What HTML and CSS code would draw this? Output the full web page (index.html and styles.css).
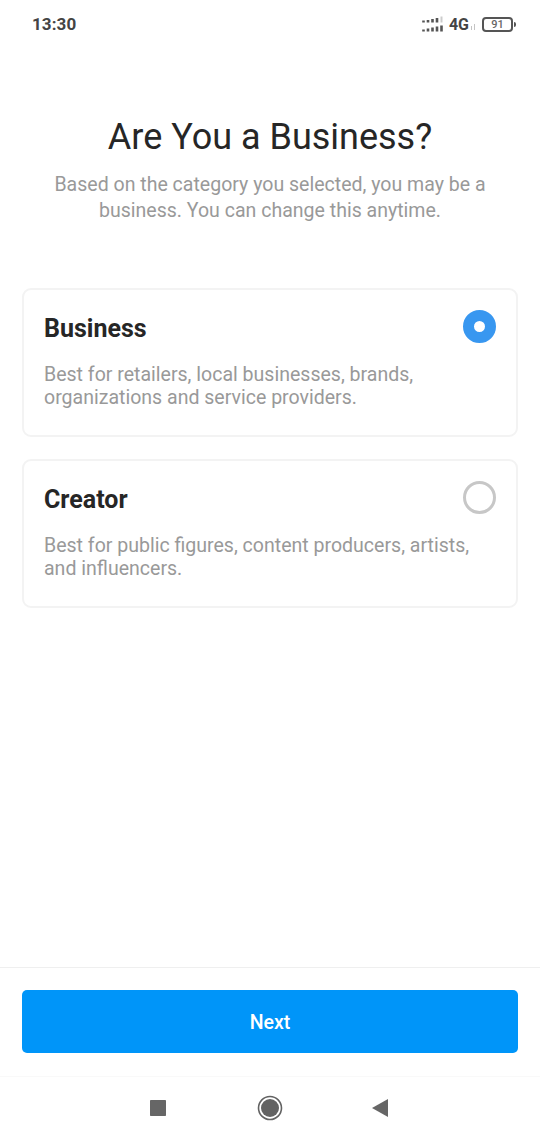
FILE: index.html
```html
<!DOCTYPE html>
<html lang="en">
<head>
<meta charset="utf-8">
<title>Are You a Business?</title>
<link rel="stylesheet" href="styles.css">
</head>
<body>
<div class="screen">
  <header class="status">
    <span class="clock">13:30</span>
    <div class="indicators">
      <svg class="signal" width="21" height="16" viewBox="0 0 21 16" fill="none" stroke="#555" stroke-width="2.6"><path d="M1.5 6.5V4.5M6 6.5V4M10.5 6.5V3M15 6.5V2"/><path d="M19.5 6.5V.5" stroke="#ccc" stroke-width="2"/><path d="M1.5 15.5v-2M6 15.5v-3M10.5 15.5v-4M15 15.5v-5M19.5 15.5v-6"/></svg>
      <span class="network">4G</span>
      <svg class="activity" width="6" height="6" viewBox="0 0 6 6" stroke="#c4c4c4"><path d="M1.5 6V2M4.5 6V0"/></svg>
      <span class="battery">91</span>
      <span class="battery-tip"></span>
    </div>
  </header>
  <main class="content">
    <h1 class="title">Are You a Business?</h1>
    <p class="subtitle">Based on the category you selected, you may be a<br>business. You can change this anytime.</p>
    <div class="options">
      <section class="card">
        <div class="card-head"><h2 class="card-title">Business</h2><span class="radio selected"></span></div>
        <p class="card-text">Best for retailers, local businesses, brands,<br>organizations and service providers.</p>
      </section>
      <section class="card">
        <div class="card-head"><h2 class="card-title">Creator</h2><span class="radio"></span></div>
        <p class="card-text">Best for public figures, content producers, artists,<br>and influencers.</p>
      </section>
    </div>
  </main>
  <footer class="footer"><button class="next">Next</button></footer>
  <nav class="navbar">
    <svg width="18" height="18" viewBox="0 0 18 18"><rect x="1" y="1" width="16" height="16" rx=".7" fill="#666"/></svg>
    <svg width="26" height="26" viewBox="0 0 26 26"><circle cx="13" cy="13" r="11.5" fill="none" stroke="#626262" stroke-width="1.6"/><circle cx="13" cy="13" r="9" fill="#626262"/></svg>
    <svg class="back" width="18" height="20" viewBox="0 0 18 20"><path d="M0 10L16 1v18z" fill="#666"/></svg>
  </nav>
</div>
</body>
</html>
```
FILE: styles.css
```css
* { box-sizing: border-box; }
body { margin: 0; background: #fff; font-family: Roboto, sans-serif; }
h1, h2, p { margin: 0; }
svg { display: block; flex: none; }
.screen { width: 540px; height: 1140px; display: flex; flex-direction: column; }
.status { height: 48px; padding: 0 24px 0 32px; display: flex; align-items: center; justify-content: space-between; color: #444; }
.clock { font-size: 17px; font-weight: 700; letter-spacing: .1px; }
.indicators { display: flex; align-items: center; }
.network { margin-left: 6px; padding-top: 2px; font-size: 16px; font-weight: 700; line-height: 16px; }
.activity { margin: 6px 6px 0 1px; }
.battery { width: 31px; height: 15px; border: 2px solid #555; border-radius: 4px; font-size: 11px; line-height: 12px; text-align: center; font-weight: 500; color: #666; }
.battery-tip { width: 2px; height: 5px; margin-left: 1px; border-radius: 0 2px 2px 0; background: #555; }
.content { flex: 1; padding: 67px 22px 0; }
.title { font-size: 36px; line-height: 44px; font-weight: 400; text-align: center; color: #262626; }
.subtitle { margin-top: 13px; font-size: 19.55px; line-height: 26px; text-align: center; color: #999; }
.options { margin-top: 64px; display: flex; flex-direction: column; gap: 22px; }
.card { height: 149px; border: 2px solid #f3f3f3; border-radius: 9px; padding: 19px 20px; }
.card-head { display: flex; justify-content: space-between; height: 34px; align-items: center; }
.card-title { padding-top: 6px; font-size: 25px; line-height: 34px; font-weight: 700; color: #262626; }
.radio { width: 33px; height: 33px; border-radius: 50%; border: 3px solid #c7c7c7; }
.selected { border: 11px solid #3897f0; }
.card-text { margin-top: 20px; font-size: 19.55px; line-height: 23px; color: #999; }
.footer { height: 109px; border-top: 1px solid #efefef; padding: 21.5px 22px; }
.next { display: block; width: 100%; height: 63.5px; padding: 2px 0 0; border: 0; border-radius: 5px; background: #0095f9; color: #fff; font: 500 19.5px Roboto, sans-serif; }
.navbar { height: 64px; padding-bottom: 2px; border-top: 1px solid #f9f9f9; display: flex; justify-content: center; align-items: center; gap: 90px; }
.back { margin-left: -1px; margin-right: 1px; }
```
